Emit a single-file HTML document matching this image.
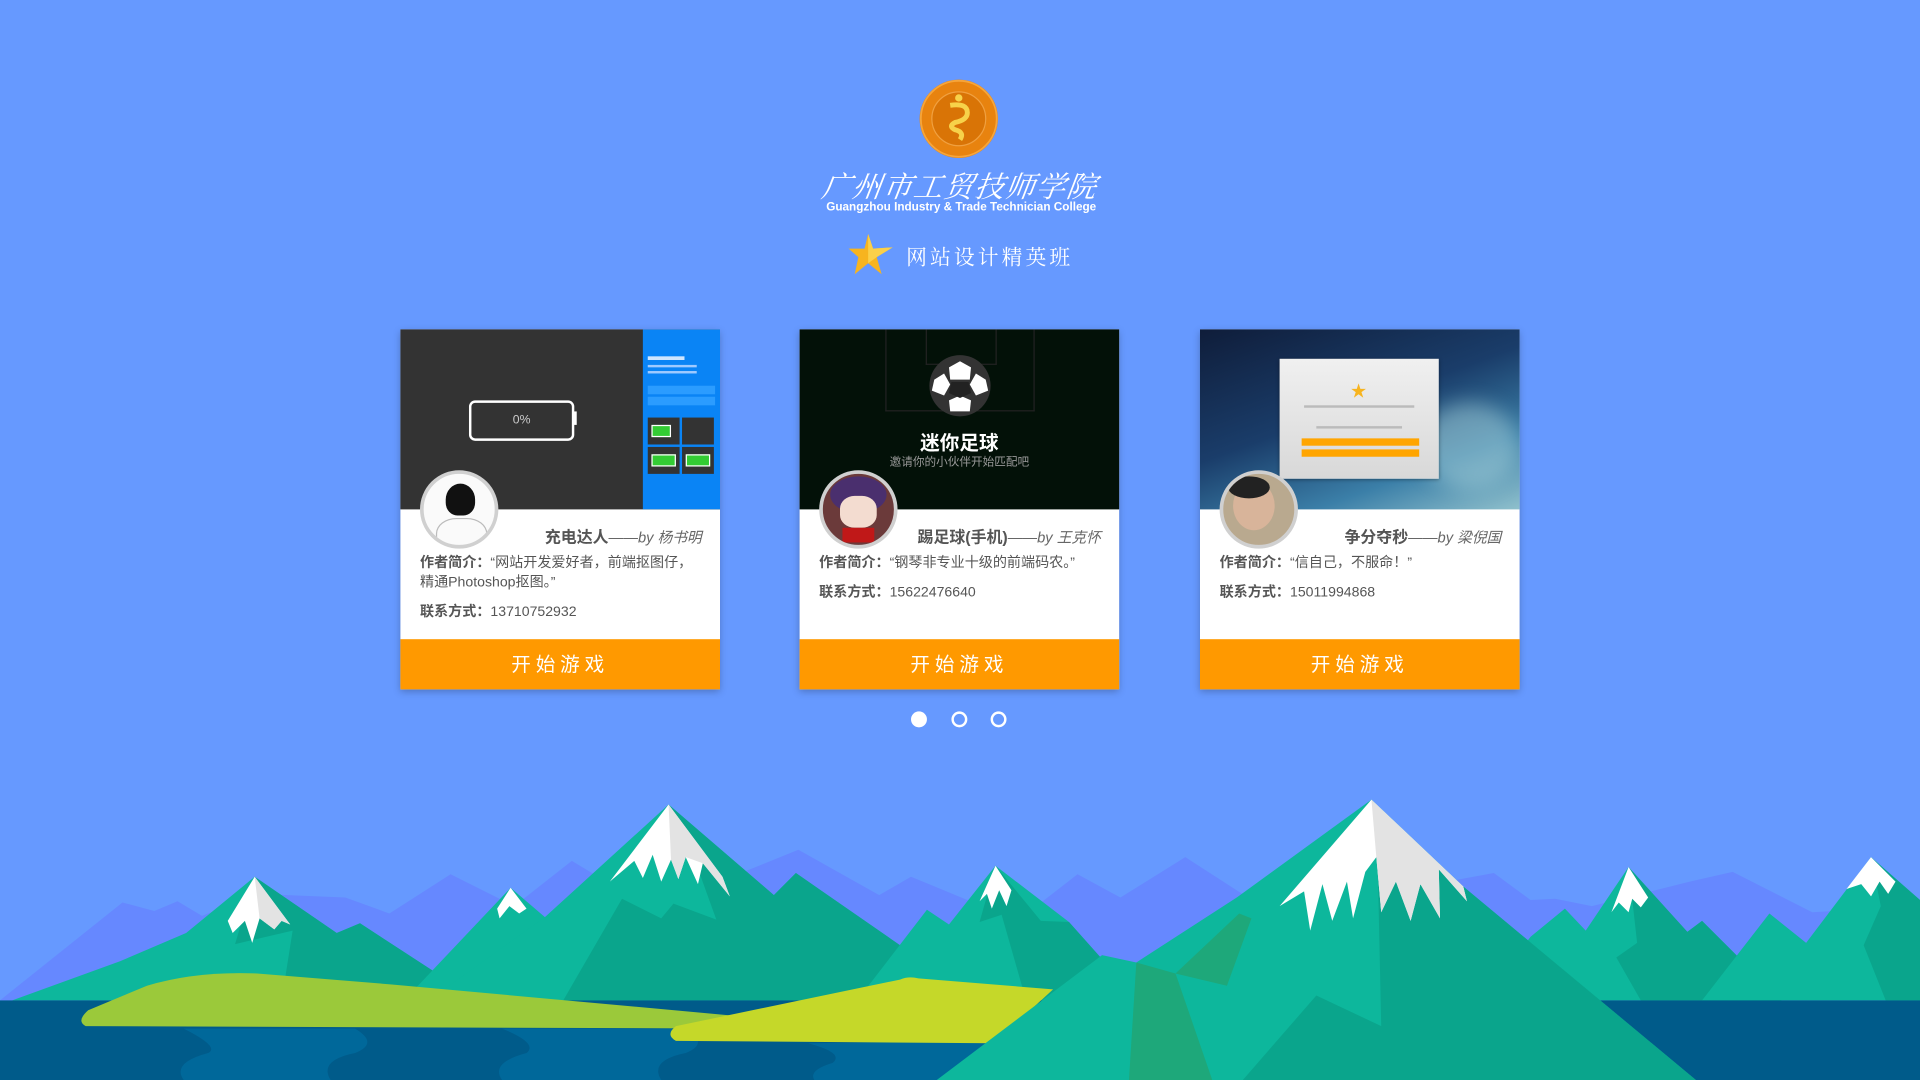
<!DOCTYPE html>
<html><head><meta charset="utf-8">
<style>
html,body{margin:0;padding:0;width:1920px;height:1080px;overflow:hidden;background:#6699ff;}
#w{position:absolute;left:0;top:0;width:1568px;height:882px;transform:scale(1.22449);transform-origin:0 0;background:#6699ff;font-family:"Liberation Sans","Noto Sans CJK SC",sans-serif;}
.abs{position:absolute;}
.card{position:absolute;top:269px;width:261px;height:294px;background:#fff;box-shadow:0 2px 6px rgba(0,0,0,.25);}
.img{position:absolute;left:0;top:0;width:261px;height:147px;overflow:hidden;}
.av{position:absolute;left:16px;top:115px;width:58px;height:58px;border-radius:50%;border:3px solid #d0d0d0;overflow:hidden;background:#eee;}
.title{position:absolute;right:15px;top:159px;font-size:13px;color:#555;white-space:nowrap;}
.title b{font-weight:bold;}
.title i{font-size:12px;color:#666;}
.txt{position:absolute;left:16px;top:183px;width:228px;font-size:11.5px;line-height:16px;color:#555;}
.txt b{font-weight:bold;}
.ct{position:absolute;left:16px;font-size:11.5px;color:#555;}
.btn{position:absolute;left:0;top:253px;width:261px;height:41px;background:#ff9900;color:#fff;font-size:16px;letter-spacing:4px;text-align:center;line-height:43px;font-family:"Liberation Sans","Noto Sans CJK SC",sans-serif;}
.dot{position:absolute;top:581px;width:13px;height:13px;border-radius:50%;border:2px solid #fff;box-sizing:border-box;}
</style></head><body>
<div id="w">
<svg class="abs" style="left:740px;top:58px" width="86" height="78" viewBox="0 0 86 78">
<circle cx="43" cy="39" r="32" fill="#e8830f"/>
<circle cx="43" cy="39" r="31" fill="none" stroke="#f6a53a" stroke-width="1.5"/>
<circle cx="43" cy="39" r="22" fill="#d97406" stroke="#f0a040" stroke-width="1"/>
<path d="M36 28 Q50 26 50 34 Q50 40 40 42 Q34 45 40 48 Q48 50 44 56" fill="none" stroke="#f7d24a" stroke-width="4"/>
<circle cx="43" cy="22" r="3" fill="#f7d24a"/>
</svg>
<div class="abs" style="left:668px;top:133px;width:232px;text-align:center;color:#fff;font-size:24px;font-style:italic;font-family:'Noto Serif CJK SC','Liberation Serif',serif;letter-spacing:1px;white-space:nowrap;transform:skewX(-8deg)">广州市工贸技师学院</div>
<div class="abs" style="left:668px;top:164px;width:234px;text-align:center;color:#fff;font-size:9.6px;font-weight:bold;white-space:nowrap">Guangzhou Industry &amp; Trade Technician College</div>
<svg class="abs" style="left:692px;top:190px" width="38" height="36" viewBox="0 0 38 36">
<polygon points="17,1 21,13 37,12 24,20 28,34 17,25 6,34 9,20 1,13 14,13" fill="#f7b41f"/>
<polygon points="17,1 21,13 37,12 24,20 17,25" fill="#fbd04a"/>
</svg>
<div class="abs" style="left:740px;top:196px;color:#fff;font-size:17px;letter-spacing:2.5px;font-family:'Noto Serif CJK SC','Liberation Serif',serif;white-space:nowrap">网站设计精英班</div>

<div class="card" style="left:327px">
 <div class="img" style="background:#333">
  <div class="abs" style="left:56px;top:58px;width:82px;height:29px;border:2px solid #fff;border-radius:5px;color:#ccc;font-size:10px;text-align:center;line-height:29px">0%</div>
  <div class="abs" style="left:141px;top:67px;width:3px;height:11px;background:#fff"></div>
  <div class="abs" style="left:198px;top:0;width:63px;height:147px;background:#0a84f5">
   <div class="abs" style="left:4px;top:22px;width:30px;height:3px;background:#cfe6ff"></div>
   <div class="abs" style="left:4px;top:29px;width:40px;height:2px;background:#9fcaff"></div>
   <div class="abs" style="left:4px;top:34px;width:40px;height:2px;background:#9fcaff"></div>
   <div class="abs" style="left:4px;top:46px;width:55px;height:7px;background:#2b9cff"></div>
   <div class="abs" style="left:4px;top:55px;width:55px;height:7px;background:#2b9cff"></div>
   <div class="abs" style="left:4px;top:72px;width:26px;height:22px;background:#333"></div>
   <div class="abs" style="left:32px;top:72px;width:26px;height:22px;background:#333"></div>
   <div class="abs" style="left:4px;top:96px;width:26px;height:22px;background:#333"></div>
   <div class="abs" style="left:32px;top:96px;width:26px;height:22px;background:#333"></div>
   <div class="abs" style="left:7px;top:78px;width:14px;height:8px;background:#3c3;border:1px solid #fff"></div>
   <div class="abs" style="left:7px;top:102px;width:18px;height:8px;background:#3c3;border:1px solid #fff"></div>
   <div class="abs" style="left:35px;top:102px;width:18px;height:8px;background:#3c3;border:1px solid #fff"></div>
  </div>
 </div>
 <div class="av" style="background:#fafafa"><div class="abs" style="left:18px;top:8px;width:24px;height:26px;border-radius:50% 50% 40% 40%;background:#111"></div><div class="abs" style="left:10px;top:36px;width:40px;height:30px;border:1px solid #bbb;border-radius:40% 40% 0 0"></div></div>
 <div class="title"><b>充电达人</b><i>——by 杨书明</i></div>
 <div class="txt"><b>作者简介：</b>“网站开发爱好者，前端抠图仔，精通Photoshop抠图。”</div>
 <div class="ct" style="top:222px"><b>联系方式：</b>13710752932</div>
 <div class="btn">开始游戏</div>
</div>

<div class="card" style="left:653px">
 <div class="img" style="background:#031108">
  <div class="abs" style="left:70px;top:0;width:120px;height:66px;border:1px solid #222;border-top:none"></div>
  <div class="abs" style="left:103px;top:0;width:56px;height:28px;border:1px solid #222;border-top:none"></div>
  <svg class="abs" style="left:105px;top:20px" width="52" height="52" viewBox="0 0 52 52">
   <circle cx="26" cy="26" r="25" fill="#333"/>
   <polygon points="26,6 35,11 34,21 18,21 17,11" fill="#fff"/>
   <polygon points="5,21 13,16 18,25 13,34 3,30" fill="#fff"/>
   <polygon points="47,21 49,30 39,34 34,25 39,16" fill="#fff"/>
   <polygon points="17,38 26,34 35,38 34,47 18,47" fill="#fff"/>
   <polygon points="19,23 33,23 35,32 26,36 17,32" fill="#222"/>
  </svg>
  <div class="abs" style="left:0;top:79px;width:261px;text-align:center;color:#fff;font-size:16px;font-weight:bold">迷你足球</div>
  <div class="abs" style="left:0;top:100px;width:261px;text-align:center;color:#999;font-size:9.5px">邀请你的小伙伴开始匹配吧</div>
 </div>
 <div class="av" style="background:#6b3a3a"><div class="abs" style="left:6px;top:2px;width:46px;height:30px;border-radius:50%;background:#4a2f6e"></div><div class="abs" style="left:14px;top:18px;width:30px;height:26px;border-radius:40%;background:#f3dcd0"></div><div class="abs" style="left:16px;top:44px;width:26px;height:12px;background:#c01818"></div></div>
 <div class="title"><b>踢足球(手机)</b><i>——by 王克怀</i></div>
 <div class="txt"><b>作者简介：</b>“钢琴非专业十级的前端码农。”</div>
 <div class="ct" style="top:206px"><b>联系方式：</b>15622476640</div>
 <div class="btn">开始游戏</div>
</div>

<div class="card" style="left:980px">
 <div class="img" style="background:linear-gradient(160deg,#0f1d3a 0%,#1a3d6a 45%,#3b7fa8 75%,#8fc0cc 100%)">
  <div class="abs" style="left:180px;top:60px;width:80px;height:70px;border-radius:50%;background:rgba(180,220,225,.45);filter:blur(8px)"></div>
  <div class="abs" style="left:65px;top:24px;width:130px;height:98px;background:linear-gradient(#f0f0f0,#d8d8d8);box-shadow:0 1px 3px rgba(0,0,0,.4)">
   <div class="abs" style="left:58px;top:16px;color:#f7b41f;font-size:13px">★</div>
   <div class="abs" style="left:20px;top:38px;width:90px;height:2px;background:#bbb"></div>
   <div class="abs" style="left:30px;top:55px;width:70px;height:2px;background:#bbb"></div>
   <div class="abs" style="left:18px;top:65px;width:96px;height:6px;background:#ffa500"></div>
   <div class="abs" style="left:18px;top:74px;width:96px;height:6px;background:#ffa500"></div>
  </div>
 </div>
 <div class="av" style="background:#b9a98f"><div class="abs" style="left:8px;top:6px;width:34px;height:40px;border-radius:50%;background:#d8b49a"></div><div class="abs" style="left:4px;top:2px;width:34px;height:18px;border-radius:50%;background:#222"></div></div>
 <div class="title"><b>争分夺秒</b><i>——by 梁倪国</i></div>
 <div class="txt"><b>作者简介：</b>“信自己，不服命！”</div>
 <div class="ct" style="top:206px"><b>联系方式：</b>15011994868</div>
 <div class="btn">开始游戏</div>
</div>

<div class="dot" style="left:744px;background:#fff"></div>
<div class="dot" style="left:777px"></div>
<div class="dot" style="left:809px"></div>

<svg class="abs" style="left:0;top:0" width="1568" height="882" viewBox="0 0 1568 882">
 <polygon fill="#6688ff" points="0,817 100,737 126,744 145,736 165,748 210,730 282,733 318,746 368,714 420,740 467,703 520,735 560,720 600,715 652,694 718,731 744,716 790,735 840,745 880,714 915,733 968,700 1030,740 1100,735 1220,713 1250,735 1270,734 1300,740 1380,720 1415,712 1480,745 1568,740 1568,817"/>
 <polygon fill="#0db79c" points="10,817 98,785 152,762 208,716 275,762 294,754 380,810 380,817"/>
 <polygon fill="#0aa58c" points="208,716 275,762 294,754 380,810 380,817 230,817 239,760 192,771"/>
 <polygon fill="#0db79c" points="330,817 417,725 445,749 500,817"/>
 <polygon fill="#0db79c" points="350,817 445,749 546,657 632,731 650,713 800,817"/>
 <polygon fill="#0aa58c" points="546,657 632,731 650,713 800,817 460,817 508,734 540,750 550,738 585,751 572,715"/>
 <polygon fill="#0db79c" points="700,817 757,743 775,755 813,707 873,753 930,817"/>
 <polygon fill="#0aa58c" points="813,707 850,752 873,753 930,817 838,817 818,747 800,753"/>
 <polygon fill="#0db79c" points="1210,817 1250,765 1278,742 1295,760 1330,708 1378,761 1390,752 1455,817"/>
 <polygon fill="#0aa58c" points="1330,708 1378,761 1390,752 1455,817 1340,817 1320,782 1337,770"/>
 <polygon fill="#0db79c" points="1390,817 1445,746 1475,770 1528,700 1568,735 1568,817"/>
 <polygon fill="#0aa58c" points="1528,700 1568,735 1568,817 1540,817 1522,772 1536,740"/>
 <polygon fill="#fff" points="208,716 237,755 230,752 224,759 212,750 206,770 200,752 190,762 186,752"/>
 <polygon fill="#e3e3e3" points="208,716 237,755 230,752 224,759 212,750"/>
 <polygon fill="#fff" points="417,725 430,742 424,746 416,740 408,750 406,742"/>
 <polygon fill="#fff" points="546,657 590,716 596,732 574,705 570,722 560,700 554,718 548,702 540,720 533,698 525,717 518,703 498,720"/>
 <polygon fill="#e3e3e3" points="546,657 590,716 596,732 574,705 560,700 554,718 548,702"/>
 <polygon fill="#fff" points="813,707 826,727 822,740 816,727 810,742 806,730 800,736"/>
 <polygon fill="#fff" points="1330,708 1346,733 1340,741 1333,734 1330,745 1322,737 1316,745"/>
 <polygon fill="#fff" points="1528,700 1548,720 1542,730 1535,720 1528,732 1520,722 1508,726"/>
 <rect x="0" y="817" width="1568" height="65" fill="#005b8a"/>
 <path fill="#00689a" d="M150,840 Q180,855 170,860 Q140,868 150,882 L270,882 Q260,866 290,860 Q310,852 290,840 Z M410,840 Q440,852 430,860 Q400,868 410,882 L540,882 Q530,866 560,860 Q580,852 560,840 Z M660,852 Q690,860 680,868 Q660,874 665,882 L800,882 L820,850 Z"/>
 <path fill="#9bc93a" d="M70,838 Q62,834 72,825 L120,805 Q160,793 210,795 L320,804 L605,830 L605,840 Z"/>
 <path fill="#c5d829" d="M552,850 Q543,845 552,838 L735,800 Q742,797 750,799 L860,808 L812,852 Z"/>
 <polygon fill="#0db79c" points="765,882 900,780 928,786 1010,733 1120,653 1195,724 1385,882"/>
 <polygon fill="#0aa58c" points="1120,653 1195,724 1385,882 1015,882 1075,813 1128,838 1125,700"/>
 <polygon fill="#1ea87a" points="928,786 960,795 990,882 922,882"/>
 <polygon fill="#1ea87a" points="960,795 1012,746 1022,750 1002,805"/>
 <polygon fill="#fff" points="1120,653 1195,724 1198,736 1175,710 1176,750 1160,722 1152,752 1140,720 1128,745 1124,700 1115,712 1105,750 1100,720 1088,752 1080,722 1070,760 1065,728 1045,740"/>
 <polygon fill="#e3e3e3" points="1120,653 1195,724 1198,736 1175,710 1176,750 1160,722 1152,752 1140,720 1128,745 1124,700"/>
</svg>
</div>
</body></html>
